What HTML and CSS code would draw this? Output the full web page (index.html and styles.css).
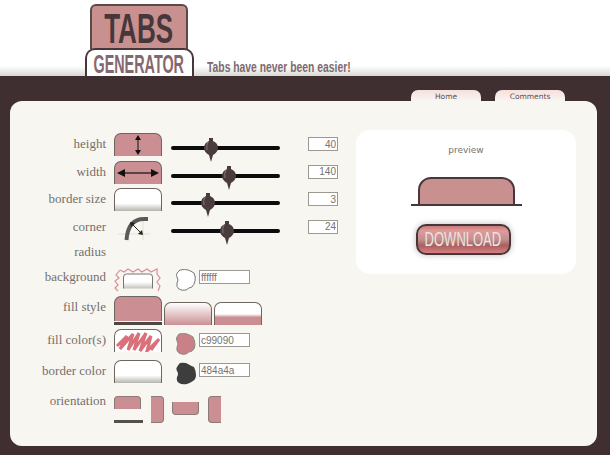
FILE: index.html
```html
<!DOCTYPE html>
<html lang="en">
<head>
<meta charset="utf-8">
<title>Tabs Generator</title>
<link rel="stylesheet" href="styles.css">
</head>
<body>
<header class="head">
  <div class="logo">
    <div class="logo-top"><span class="squeeze-tabs">TABS</span></div>
    <div class="logo-bottom"><span class="squeeze-gen">GENERATOR</span></div>
  </div>
  <div class="tagline"><span class="squeeze-tag">Tabs have never been easier!</span></div>
</header>
<main class="band">
  <nav class="tabs">
    <a class="tab">Home</a>
    <a class="tab">Comments</a>
  </nav>
  <section class="panel">
    <div class="controls">
      <div class="row r-size">
        <span class="label">height</span>
        <div class="ico pink">
          <svg width="46" height="22" viewBox="0 0 46 22"><path d="M23 3v16" stroke="#111" fill="none"/><path d="M23 1l-3 5h6zM23 21l-3-5h6z" fill="#111"/></svg>
        </div>
        <svg class="slider" width="110" height="28" viewBox="0 0 110 28"><use href="#track"/><use href="#thumb" x="34"/></svg>
        <input class="num" value="40" readonly>
      </div>
      <div class="row r-size">
        <span class="label">width</span>
        <div class="ico pink">
          <svg width="46" height="22" viewBox="0 0 46 22"><path d="M8 11h30" stroke="#111" stroke-width="1.200" fill="none"/><path d="M2 11l8-4v8zM44 11l-8-4v8z" fill="#111"/></svg>
        </div>
        <svg class="slider" width="110" height="28" viewBox="0 0 110 28"><use href="#track"/><use href="#thumb" x="52"/></svg>
        <input class="num" value="140" readonly>
      </div>
      <div class="row r-size">
        <span class="label">border size</span>
        <div class="ico blank"></div>
        <svg class="slider" width="110" height="28" viewBox="0 0 110 28"><use href="#track"/><use href="#thumb" x="31"/></svg>
        <input class="num" value="3" readonly>
      </div>
      <div class="row r-size">
        <span class="label">corner</span>
        <svg class="corner" width="48" height="26" viewBox="0 0 48 26">
          <path d="M4 18H36M29 4V24" stroke="#e4e0d4" fill="none"/>
          <path d="M34 3H30Q14 3 12.500 24" fill="none" stroke="#5a5a5a" stroke-width="4"/>
          <path d="M18 8l9 9" stroke="#222" fill="none"/>
          <path d="M16 6l5 1-4 4zM29 19l-5-1 4-4z" fill="#222"/>
        </svg>
        <svg class="slider" width="110" height="28" viewBox="0 0 110 28"><use href="#track"/><use href="#thumb" x="50"/></svg>
        <input class="num" value="24" readonly>
      </div>
      <div class="row r-radius"><span class="label">radius</span></div>

      <div class="row r-bg">
        <span class="label">background</span>
        <svg class="wide" width="48" height="26" viewBox="0 0 48 26">
          <path d="M6 3l4 2 4-3 5 3 5-3 4 3 5-3 4 3 6-3 0 5 3 4-3 4 3 4-2 5M6 3L2 8l3 3-4 3 3 4-3 3 3 3" fill="none" stroke="#d98f98" stroke-width="1.200"/>
          <path d="M9.500 21.500V10q0-3 3-3h23q3 0 3 3v11.500" fill="url(#fade)" stroke="#777"/>
        </svg>
        <svg class="blob" width="22" height="24" viewBox="0 0 22 24"><path d="M5 2q5-1 8 0t6 3q2 4 1 8t-3 6q-4 1-6 3-4 1-7-1t-2-6q2-3 0-6t3-7z" fill="#fff" stroke="#777"/></svg>
        <input class="hex" value="ffffff" readonly>
      </div>

      <div class="row r-fill">
        <span class="label">fill style</span>
        <div class="fills">
          <div class="fill-first">
            <div class="ico pink big"></div>
            <div class="fill-line"></div>
          </div>
          <div class="ico grad1"></div>
          <div class="ico grad2"></div>
        </div>
      </div>

      <div class="row r-color">
        <span class="label">fill color(s)</span>
        <div class="ico scrib">
          <svg width="46" height="22" viewBox="0 0 46 22"><path d="M2 16L12 6 5 19 18 4 13 20 24 3 19 20 31 3 25 21 36 6 32 21 44 9 36 20" fill="none" stroke="#d9707a" stroke-width="3"/></svg>
        </div>
        <svg class="blob" width="22" height="24" viewBox="0 0 22 24"><path d="M4 2q5-1 8 0t6 3q2 4 2 8t-3 6q-4 1-6 3-4 1-7-1t-2-6q2-3 0-6t2-7z" fill="#c98086" stroke="#8a8a80"/></svg>
        <input class="hex" value="c99090" readonly>
      </div>

      <div class="row r-border">
        <span class="label">border color</span>
        <div class="ico blank"></div>
        <svg class="blob" width="22" height="24" viewBox="0 0 22 24"><path d="M5 1q5-1 8 1t6 3q2 4 2 8t-3 6q-3 2-6 3-5 1-8-1t-2-6q2-3 0-6t3-8z" fill="#3d3d3d"/></svg>
        <input class="hex" value="484a4a" readonly>
      </div>

      <div class="row r-orient">
        <span class="label">orientation</span>
        <div class="orients">
          <div class="o-first"><div class="o o-top"></div><div class="o-line"></div></div>
          <div class="o o-right"></div>
          <div class="o o-bottom"></div>
          <div class="o o-left"></div>
        </div>
      </div>
    </div>

    <aside class="preview">
      <div class="preview-title">preview</div>
      <div class="preview-tab"></div>
      <div class="preview-line"></div>
      <button class="download"><span class="squeeze-dl">DOWNLOAD</span></button>
    </aside>
  </section>
</main>
<svg class="defs" width="0" height="0">
  <defs>
    <linearGradient id="fade" x1="0" y1="0" x2="0" y2="1"><stop offset=".55" stop-color="#fff"/><stop offset="1" stop-color="#c4c4bc"/></linearGradient>
    <g id="track"><rect x="0" y="11" width="109" height="4" rx="2" fill="#0c0c0c"/></g>
    <g id="thumb">
      <path d="M-1 13q0-5 5-7V3h4v3q5 2 5 7 0 4-5 7l-2 7-2-7q-5-3-5-7z" fill="#4a3c3c"/>
      <path d="M3 7q-2 3-1 8" stroke="#85797a" fill="none"/>
    </g>
  </defs>
</svg>
</body>
</html>
```
FILE: styles.css
```css
* { box-sizing: border-box; }
html, body { margin: 0; padding: 0; }
body {
  width: 610px;
  height: 455px;
  overflow: hidden;
  background: #fff;
  font-family: "Liberation Serif", serif;
}
.defs { position: absolute; }

.head {
  height: 76px;
  display: flex;
  align-items: flex-end;
  padding-left: 84px;
  background: linear-gradient(#fff 0, #fff 66px, #d8d9d3 76px);
}
.logo { width: 110px; height: 72px; display: flex; flex-direction: column; align-items: center; }
.logo-top {
  width: 98px;
  height: 45px;
  display: flex;
  justify-content: center;
  background: #c99090;
  border: 2px solid #5b4a4a;
  border-bottom: 0;
  border-radius: 6px 6px 0 0;
  color: #47373a;
  font: bold 42px/45px "Liberation Sans", sans-serif;
  white-space: nowrap;
}
.squeeze-tabs { display: block; flex: none; transform: scaleX(.62); }
.logo-bottom {
  width: 109px;
  height: 28px;
  margin-top: -1px;
  display: flex;
  justify-content: center;
  background: #fff;
  border: 2px solid #47373a;
  border-bottom: 0;
  border-radius: 10px 10px 0 0;
  color: #85686e;
  font: bold 25px/28px "Liberation Sans", sans-serif;
  white-space: nowrap;
  position: relative;
}
.squeeze-gen { display: block; flex: none; transform: scaleX(.575); }
.tagline {
  width: 143px;
  margin-left: 13px;
  margin-bottom: 1px;
  color: #7c6a70;
  font: bold 15px/16px "Liberation Sans", sans-serif;
  white-space: nowrap;
}
.squeeze-tag { display: block; width: 208px; transform: scaleX(.69); transform-origin: left center; }

.band {
  height: 379px;
  padding: 14px 13px 9px 10px;
  background: #402f30;
}
.tabs {
  display: flex;
  justify-content: flex-end;
  gap: 14px;
  padding-right: 32px;
  height: 11px;
}
.tab {
  width: 70px;
  height: 11px;
  padding-top: 2px;
  border-radius: 7px 7px 0 0;
  background: linear-gradient(#f6dfdc, #f8f6f1);
  color: #5a5050;
  font: 7.500px/9px "DejaVu Sans", sans-serif;
  text-align: center;
}
.panel {
  width: 587px;
  height: 345px;
  background: #f8f6f1;
  border-radius: 12px;
  display: flex;
  padding: 29px 0 0 0;
}

.controls { width: 346px; }
.row { display: flex; align-items: flex-start; }
.r-size { height: 27.500px; padding-top: 3px; }
.r-radius { height: 27px; padding-top: 1px; }
.r-bg { height: 28px; }
.r-fill { height: 33px; padding-top: 1px; }
.r-color { height: 31px; padding-top: 1px; }
.r-border { height: 35px; padding-top: 1px; }
.r-orient { padding-top: 2px; }

.label {
  width: 96px;
  margin: 2px 8px 0 0;
  flex: none;
  text-align: right;
  color: #74706c;
  font-size: 13px;
  line-height: 18px;
}
.r-bg .label { margin-top: 1px; }
.r-orient .label { margin-top: -4px; }
.ico {
  flex: none;
  width: 48px;
  height: 23px;
  border: 1px solid #6d6660;
  border-bottom: 0;
  border-radius: 7px 7px 0 0;
}
.ico svg { display: block; }
.pink { background: #cb8f93; }
.blank { background: linear-gradient(#fff 65%, #b5b5ad); }
.scrib { background: #fff; }
.corner, .wide { flex: none; width: 48px; }
.slider { flex: none; margin: 2px 27px 0 9px; }
.num {
  flex: none;
  width: 30px;
  height: 14px;
  margin-top: 4px;
  padding: 0 1px;
  border: 1px solid #9a9a92;
  background: #fff;
  color: #77726e;
  font: 10px/12px "Liberation Sans", sans-serif;
  text-align: right;
  outline: 0;
}
.blob { flex: none; margin: 1px 0 0 13px; }
.hex {
  flex: none;
  width: 51px;
  height: 14px;
  margin: 3px 0 0 2px;
  padding: 0 1px;
  border: 1px solid #9a9a92;
  background: #fff;
  color: #77726e;
  font: 10px/12px "Liberation Sans", sans-serif;
  outline: 0;
}
.r-color .blob { margin-top: 3px; }
.r-color .hex { margin-top: 4px; }
.r-border .blob { margin-top: 2px; }

.fills { display: flex; align-items: flex-end; height: 29px; gap: 2px; }
.fill-first { width: 48px; }
.big { height: 25px; }
.fill-line { height: 3px; margin-top: 1px; background: #4f4644; }
.grad1 { background: linear-gradient(#fff, #cb8f93); }
.grad2 { background: linear-gradient(#fff 50%, #cb8f93 65%); }

.orients { display: flex; align-items: flex-start; }
.o { background: #cb8f93; border: 1px solid #8a7a78; }
.o-first { width: 29px; }
.o-top { width: 27px; height: 13px; border-bottom: 0; border-radius: 4px 4px 0 0; }
.o-line { width: 29px; height: 3px; margin-top: 11px; background: #55504c; }
.o-right { width: 13px; height: 27px; margin-left: 8px; border-left: 0; border-radius: 0 4px 4px 0; }
.o-bottom { width: 27px; height: 13px; margin: 6px 0 0 8px; border-top: 0; border-radius: 0 0 4px 4px; }
.o-left { width: 13px; height: 27px; margin-left: 9px; border-right: 0; border-radius: 4px 0 0 4px; }

.preview {
  width: 220px;
  height: 144px;
  background: #fff;
  border-radius: 14px;
  display: flex;
  flex-direction: column;
  align-items: center;
  padding-top: 14px;
}
.preview-title {
  height: 13px;
  color: #77726e;
  font: 9px/13px "DejaVu Sans", sans-serif;
}
.preview-tab {
  width: 97px;
  height: 27px;
  margin-top: 20px;
  background: #c99090;
  border: 2px solid #47373a;
  border-bottom: 0;
  border-radius: 13px 13px 0 0;
}
.preview-line { width: 111px; height: 2px; background: #47373a; }
.download {
  width: 95px;
  height: 31px;
  margin: 18px 6px 0 0;
  padding: 0;
  display: flex;
  justify-content: center;
  border: 2px solid #47373a;
  border-radius: 10px;
  background: linear-gradient(#c97a7a 0, #e29a9a 18%, #c09090 50%, #a86060 72%, #d87f82 100%);
  box-shadow: 0 0 6px #bbb;
  color: #ebe4e0;
  font: 20px/27px "Liberation Sans", sans-serif;
  white-space: nowrap;
}
.squeeze-dl { display: block; flex: none; transform: scaleX(.65); }
```
